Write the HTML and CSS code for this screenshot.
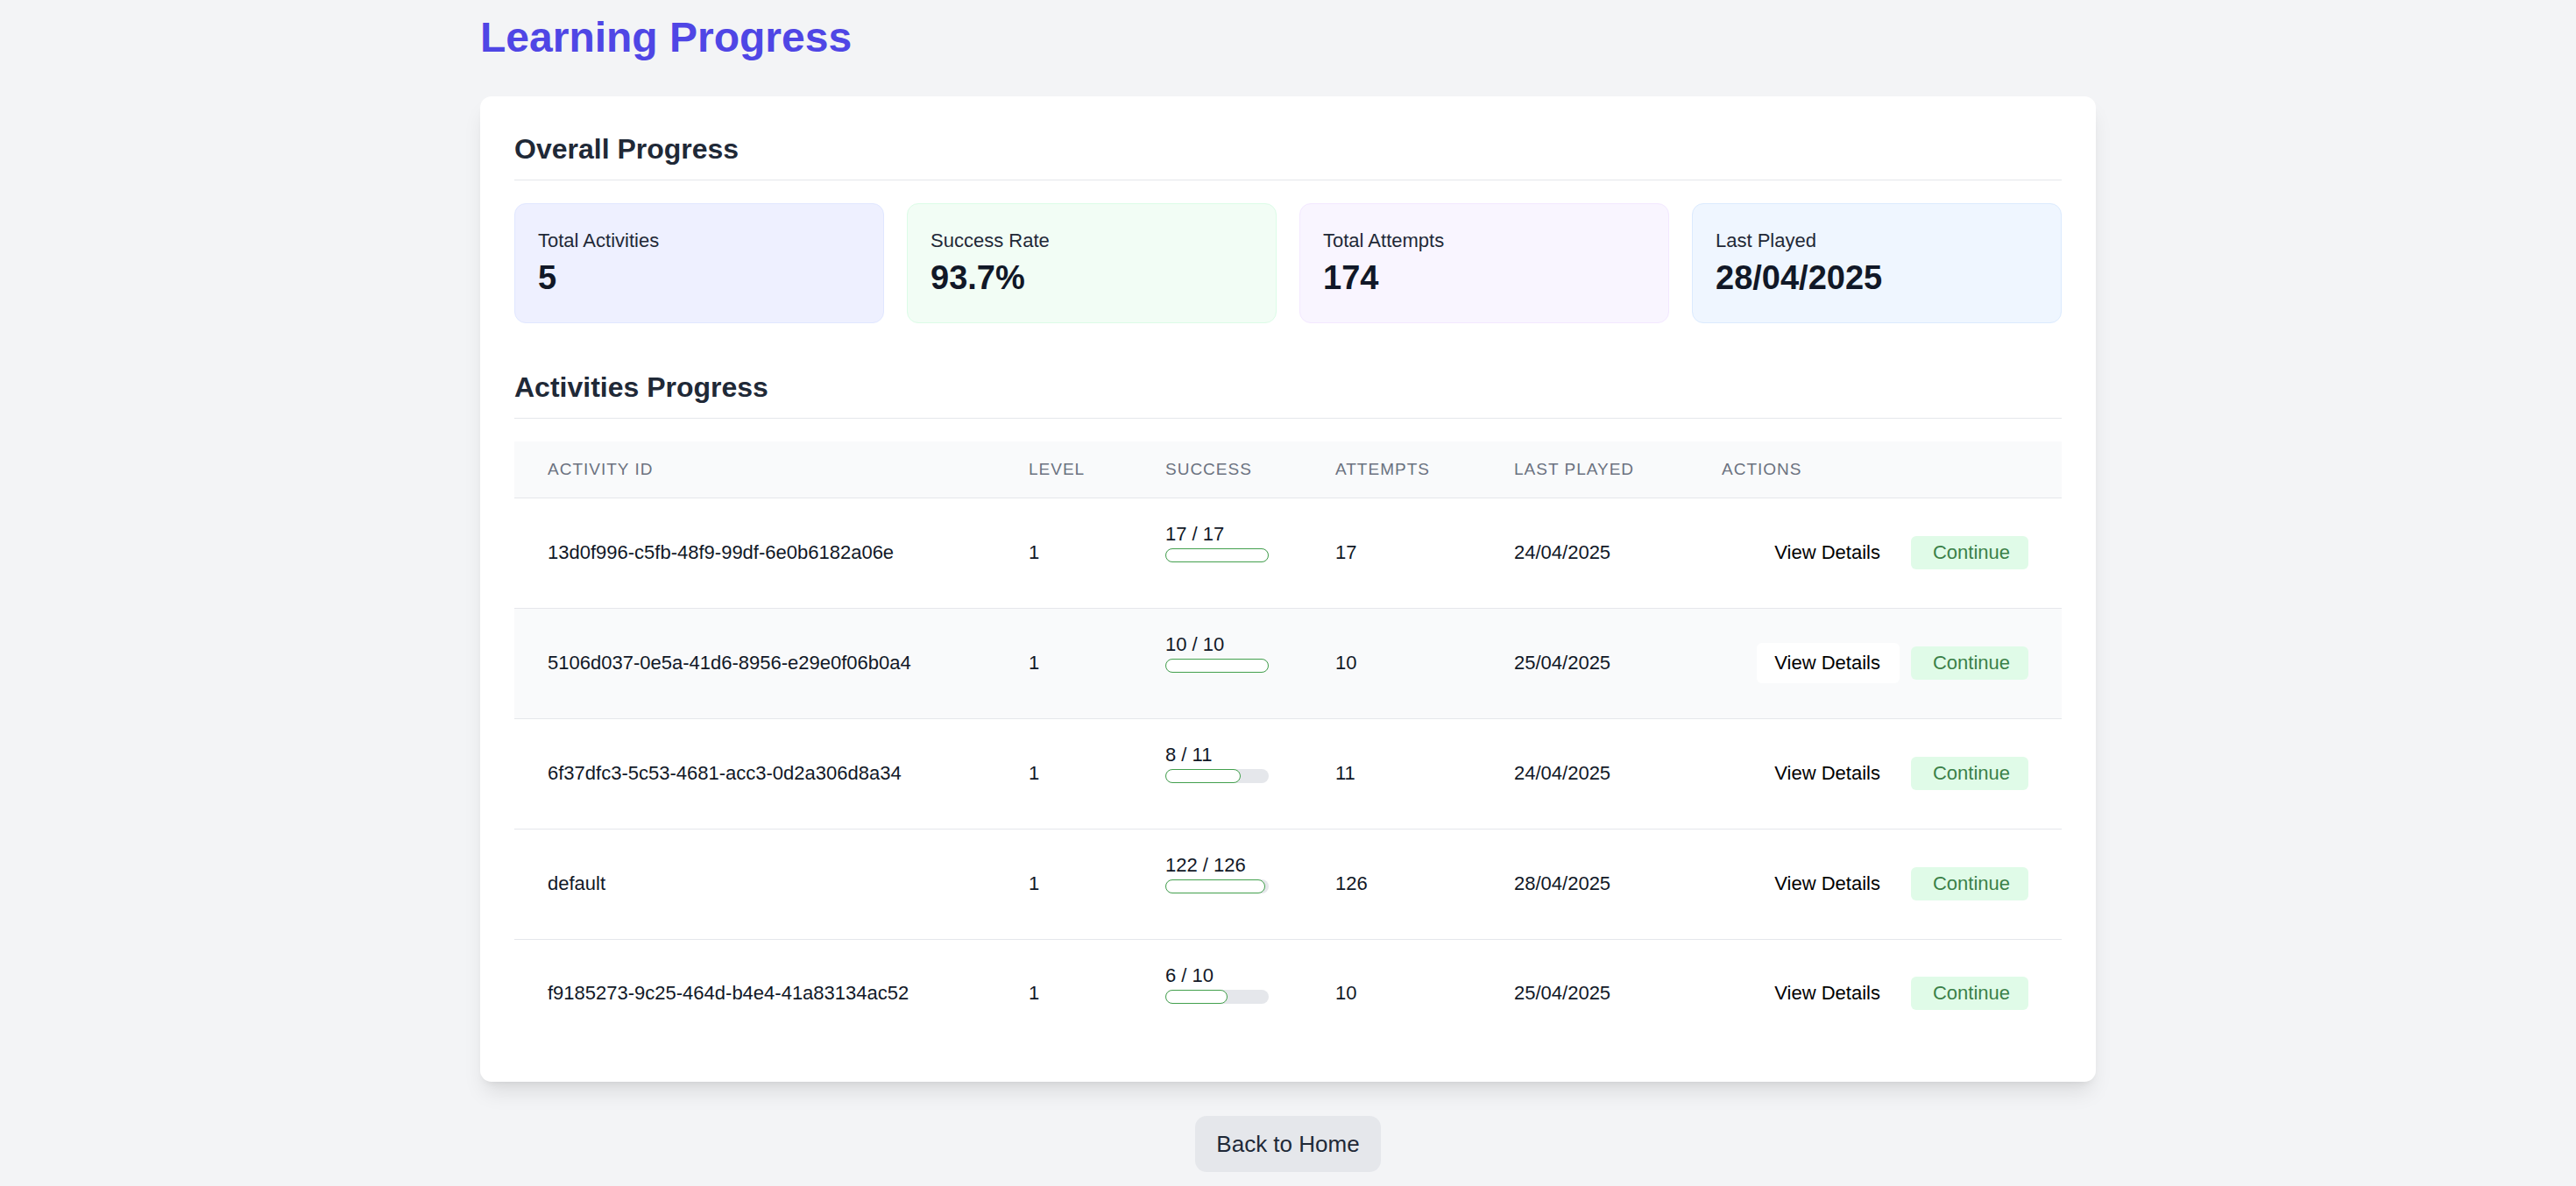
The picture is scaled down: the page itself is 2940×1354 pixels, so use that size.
FILE: index.html
```html
<!DOCTYPE html>
<html lang="en">
<head>
  <meta charset="utf-8">
  <meta name="viewport" content="width=device-width, initial-scale=1">
  <title>Learning Progress</title>
  <link rel="stylesheet" href="styles.css">
</head>
<body>
  <main class="page">
    <h1 class="page-title">Learning Progress</h1>

    <div class="card">
      <section class="section">
        <h2 class="section-title">Overall Progress</h2>
        <div class="stats">
          <div class="stat stat-indigo"><p class="stat-label">Total Activities</p><p class="stat-value">5</p></div>
          <div class="stat stat-green"><p class="stat-label">Success Rate</p><p class="stat-value">93.7%</p></div>
          <div class="stat stat-purple"><p class="stat-label">Total Attempts</p><p class="stat-value">174</p></div>
          <div class="stat stat-blue"><p class="stat-label">Last Played</p><p class="stat-value">28/04/2025</p></div>
        </div>
      </section>

      <section class="section">
        <h2 class="section-title">Activities Progress</h2>
        <table class="activities">
          <colgroup>
            <col class="col-id"><col class="col-level"><col class="col-success"><col class="col-attempts"><col class="col-played"><col>
          </colgroup>
          <thead>
            <tr><th scope="col">ACTIVITY ID</th><th scope="col">LEVEL</th><th scope="col">SUCCESS</th><th scope="col">ATTEMPTS</th><th scope="col">LAST PLAYED</th><th scope="col">ACTIONS</th></tr>
          </thead>
          <tbody>
            <tr>
              <td>13d0f996-c5fb-48f9-99df-6e0b6182a06e</td><td>1</td>
              <td class="success">17 / 17<div class="track"><div class="fill" style="width: 100%"></div></div></td>
              <td>17</td><td>24/04/2025</td>
              <td><div class="actions"><button class="view" type="button">View Details</button><button class="continue" type="button">Continue</button></div></td>
            </tr>
            <tr class="active">
              <td>5106d037-0e5a-41d6-8956-e29e0f06b0a4</td><td>1</td>
              <td class="success">10 / 10<div class="track"><div class="fill" style="width: 100%"></div></div></td>
              <td>10</td><td>25/04/2025</td>
              <td><div class="actions"><button class="view" type="button">View Details</button><button class="continue" type="button">Continue</button></div></td>
            </tr>
            <tr>
              <td>6f37dfc3-5c53-4681-acc3-0d2a306d8a34</td><td>1</td>
              <td class="success">8 / 11<div class="track"><div class="fill" style="width: 73%"></div></div></td>
              <td>11</td><td>24/04/2025</td>
              <td><div class="actions"><button class="view" type="button">View Details</button><button class="continue" type="button">Continue</button></div></td>
            </tr>
            <tr>
              <td>default</td><td>1</td>
              <td class="success">122 / 126<div class="track"><div class="fill" style="width: 97%"></div></div></td>
              <td>126</td><td>28/04/2025</td>
              <td><div class="actions"><button class="view" type="button">View Details</button><button class="continue" type="button">Continue</button></div></td>
            </tr>
            <tr>
              <td>f9185273-9c25-464d-b4e4-41a83134ac52</td><td>1</td>
              <td class="success">6 / 10<div class="track"><div class="fill" style="width: 60%"></div></div></td>
              <td>10</td><td>25/04/2025</td>
              <td><div class="actions"><button class="view" type="button">View Details</button><button class="continue" type="button">Continue</button></div></td>
            </tr>
          </tbody>
        </table>
      </section>
    </div>

    <div class="footer"><button class="home" type="button">Back to Home</button></div>
  </main>
</body>
</html>
```
FILE: styles.css
```css
* {
  box-sizing: border-box;
}

body {
  margin: 0;
  background: #f3f4f6;
  color: #111827;
  font: 22px/32px "Liberation Sans", Arial, sans-serif;
}

h1, h2, p {
  margin: 0;
}

button {
  border: 0;
  font: inherit;
  cursor: pointer;
}

.page {
  max-width: 1844px;
  margin: 0 auto;
  padding: 14px 0;
}

.page-title {
  margin-bottom: 38px;
  color: #4f46e5;
  font-size: 48px;
  line-height: 58px;
}

.card {
  display: flex;
  flex-direction: column;
  gap: 51px;
  padding: 38px 39px;
  border-radius: 13px;
  background: #fff;
  box-shadow: 0 16px 24px -5px rgb(0 0 0 / 10%), 0 6px 10px -6px rgb(0 0 0 / 10%);
}

.section-title {
  margin-bottom: 26px;
  padding-bottom: 12px;
  border-bottom: 1px solid #e5e7eb;
  color: #1f2937;
  font-size: 32px;
  line-height: 45px;
}

.stats {
  display: grid;
  grid-template-columns: repeat(4, 1fr);
  gap: 26px;
}

.stat {
  padding: 26px 26px 24px;
  border: 1px solid;
  border-radius: 13px;
}

.stat-indigo { background: #eef0ff; border-color: #e0e7ff; }
.stat-green { background: #f2fdf5; border-color: #dcfce7; }
.stat-purple { background: #f9f5ff; border-color: #f3e8ff; }
.stat-blue { background: #eff6ff; border-color: #dbeafe; }

.stat-label {
  color: #1f2937;
}

.stat-value {
  font-size: 38px;
  font-weight: 700;
  line-height: 53px;
}

.activities {
  width: 100%;
  border-spacing: 0;
  table-layout: fixed;
}

.col-id { width: 549px; }
.col-level { width: 156px; }
.col-success { width: 194px; }
.col-attempts { width: 204px; }
.col-played { width: 237px; }

.activities th {
  padding: 19px 38px;
  border-bottom: 1px solid #e5e7eb;
  background: #f9fafb;
  color: #6b7280;
  font-size: 19px;
  font-weight: 400;
  line-height: 26px;
  letter-spacing: 1px;
  text-align: left;
  white-space: nowrap;
}

.activities td {
  height: 126px;
  padding: 0 38px 2px;
  border-bottom: 1px solid #e5e7eb;
  white-space: nowrap;
}

.activities tbody tr:last-child td {
  height: 124px;
  border-bottom: 0;
}

.activities .active td {
  background: #f9fafb;
}

.activities .success {
  padding-top: 25px;
  vertical-align: top;
}

.track {
  border-radius: 8px;
  background: #e5e7eb;
}

.fill {
  height: 16px;
  border: 1px solid #43a04d;
  border-radius: 8px;
  background: #fff;
}

.actions {
  display: flex;
  align-items: center;
  justify-content: flex-end;
  gap: 13px;
}

.view {
  padding: 7px 22px 7px 20px;
  border-radius: 6px;
  background: #fff;
  color: #000;
}

.continue {
  padding: 3px 21px 3px 25px;
  border-radius: 6px;
  background: #e0fbe8;
  color: #3b8148;
}

.footer {
  display: flex;
  justify-content: center;
  margin-top: 39px;
}

.home {
  padding: 13px 24px;
  border-radius: 13px;
  background: #e5e7eb;
  color: #1f2937;
  font-size: 26px;
  line-height: 38px;
}
```
